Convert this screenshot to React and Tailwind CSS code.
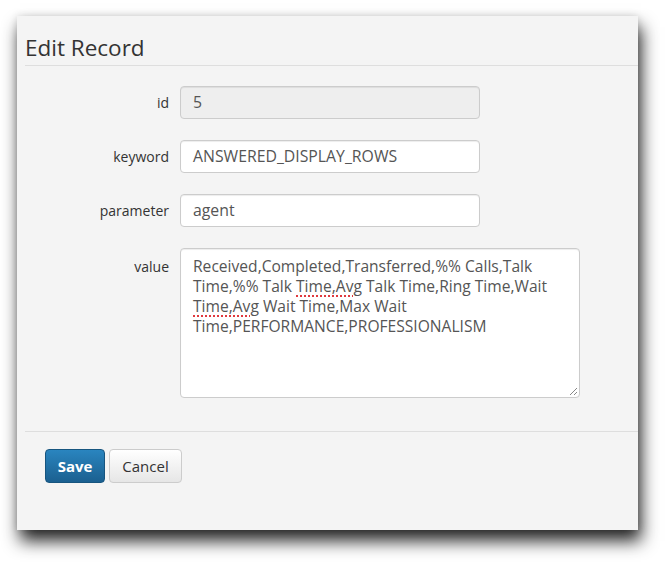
import React from "react";

const font = { fontFamily: '"Open Sans", "DejaVu Sans", sans-serif' };

function Row({ label, children, alignTop }) {
  return (
    <div className={`flex ${alignTop ? "items-start" : "items-center"}`}>
      <div
        className={`w-[152px] text-right text-[14px] text-[#333] ${alignTop ? "pt-[8px]" : ""}`}
      >
        {label}
      </div>
      <div className="ml-[11px]">{children}</div>
    </div>
  );
}

function Input({ value, disabled }) {
  return (
    <div
      className={`w-[300px] h-[33px] rounded-[4px] border border-[#cccccc] px-[12px] flex items-center text-[15.8px] text-[#555] shadow-[inset_0_1px_1px_rgba(0,0,0,0.075)] ${
        disabled ? "bg-[#eeeeee]" : "bg-white"
      }`}
    >
      {value}
    </div>
  );
}

const bad = "underline decoration-dotted decoration-[#e0393e] decoration-2 underline-offset-[3px]";

export default function App() {
  return (
    <div className="w-[669px] h-[562px] bg-white overflow-hidden" style={font}>
      <div className="ml-[17px] mt-[16px] w-[621px] h-[514px] bg-[#f4f4f4] shadow-[0_0_8px_rgba(0,0,0,0.12),3px_11px_16px_rgba(0,0,0,0.85)]">
        <div className="ml-[8px] h-[50px] pt-[17px] border-b border-[#dedede]">
          <h1 className="text-[22.5px] leading-[30px] text-[#333]">Edit Record</h1>
        </div>
        <div className="pt-[20px] flex flex-col gap-[21px]">
          <Row label="id">
            <Input value="5" disabled />
          </Row>
          <Row label="keyword">
            <Input value="ANSWERED_DISPLAY_ROWS" />
          </Row>
          <Row label="parameter">
            <Input value="agent" />
          </Row>
          <Row label="value" alignTop>
            <div className="relative w-[400px] h-[150px] rounded-[4px] border border-[#cccccc] bg-white px-[12px] pt-[7px] text-[15.6px] leading-[20px] text-[#555] shadow-[inset_0_1px_1px_rgba(0,0,0,0.075)]">
              <div className="whitespace-nowrap">Received,Completed,Transferred,%% Calls,Talk</div>
              <div className="whitespace-nowrap">
                Time,%% Talk <span className={bad}>Time,Avg</span> Talk Time,Ring Time,Wait
              </div>
              <div className="whitespace-nowrap">
                <span className={bad}>Time,Avg</span> Wait Time,Max Wait
              </div>
              <div className="whitespace-nowrap">Time,PERFORMANCE,PROFESSIONALISM</div>
              <svg
                className="absolute right-[1px] bottom-[1px]"
                width="9"
                height="9"
                viewBox="0 0 9 9"
              >
                <line x1="8" y1="1" x2="1" y2="8" stroke="#888" strokeWidth="1" />
                <line x1="8" y1="5" x2="5" y2="8" stroke="#888" strokeWidth="1" />
              </svg>
            </div>
          </Row>
        </div>
        <div className="ml-[8px] mt-[33px] border-t border-[#dedede] pl-[20px] pt-[17px] flex gap-[4px]">
          <button className="w-[60px] h-[34px] rounded-[4px] border border-[#17557f] bg-gradient-to-b from-[#2a85bf] to-[#1b6090] text-white font-bold text-[15px]">
            Save
          </button>
          <button className="w-[73px] h-[34px] rounded-[4px] border border-[#cccccc] bg-gradient-to-b from-white to-[#e6e6e6] text-[#333] text-[15px]">
            Cancel
          </button>
        </div>
      </div>
    </div>
  );
}
